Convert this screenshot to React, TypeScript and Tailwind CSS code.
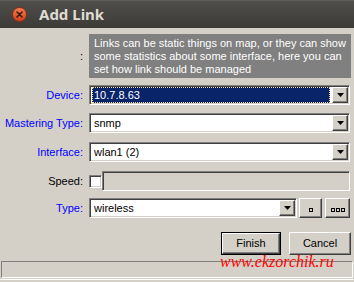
import React from 'react';

const sunken = 'border border-t-[#808080] border-l-[#808080] border-r-white border-b-white shadow-[inset_1px_1px_#404040,inset_-1px_-1px_#d4d0c8]';
const raised = 'border border-t-white border-l-white border-r-[#404040] border-b-[#404040] shadow-[inset_-1px_-1px_#808080]';

function Arrow() {
  return (
    <div className={`w-[16px] h-[16px] bg-[#d4d0c8] flex items-center justify-center ${raised}`}>
      <svg width="7" height="4" viewBox="0 0 7 4">
        <path d="M0 0h7L3.5 4z" fill="#000" />
      </svg>
    </div>
  );
}

function Label({ text, blue = true }: { text: string; blue?: boolean }) {
  return (
    <div className={`w-[84px] text-right pr-[1px] ${blue ? 'text-[#0000ff]' : 'text-black'}`}>{text}</div>
  );
}

function Combo({ value, selected = false, className = '' }: { value: string; selected?: boolean; className?: string }) {
  return (
    <div className={`h-[20px] bg-white flex items-center pl-[2px] pr-[1px] gap-[2px] ${sunken} ${className}`}>
      {selected ? (
        <div className="flex-1 h-[16px] bg-[#0a246a] text-white border border-dotted border-[#f5db95] flex items-center pl-[1px]">
          {value}
        </div>
      ) : (
        <div className="flex-1 h-[16px] flex items-center pl-[2px]">{value}</div>
      )}
      <Arrow />
    </div>
  );
}

export default function App() {
  return (
    <div className="w-[354px] h-[282px] bg-[#d4d0c8] flex flex-col overflow-hidden relative font-['Liberation_Sans',sans-serif] text-[11px] text-black">
      {/* Title bar */}
      <div className="h-[28px] shrink-0 bg-gradient-to-b from-[#4f4e4a] to-[#3c3b37] flex items-center border-t border-[#5f5e58]">
        <div className="ml-[12px] w-[15px] h-[15px] rounded-full bg-gradient-to-b from-[#f47a52] to-[#d2421a] border border-[#8a2e12] flex items-center justify-center">
          <svg width="7" height="7" viewBox="0 0 7 7">
            <path d="M1 1l5 5M6 1l-5 5" stroke="#3a1a0c" strokeWidth="1.6" strokeLinecap="round" />
          </svg>
        </div>
        <span className="ml-[12px] font-['Noto_Sans',sans-serif] font-bold text-[15px] text-[#dfdbd2] leading-none">Add Link</span>
      </div>

      {/* Body */}
      <div className="flex-1 flex flex-col pr-[3px]">
        <div className="flex items-center mt-[6px] gap-[5px]">
          <Label text=":" blue={false} />
          <div className="flex-1 h-[44px] bg-[#808080] text-white px-[5px] pt-[3px] leading-[13px]">
            Links can be static things on map, or they can show some statistics about some interface, here you can set how link should be managed
          </div>
        </div>

        <div className="flex items-center mt-[7px] gap-[5px]">
          <Label text="Device:" />
          <Combo value="10.7.8.63" selected className="flex-1 mr-[1px]" />
        </div>
        <div className="flex items-center mt-[8px] gap-[5px]">
          <Label text="Mastering Type:" />
          <Combo value="snmp" className="flex-1 mr-[1px]" />
        </div>
        <div className="flex items-center mt-[9px] gap-[5px]">
          <Label text="Interface:" />
          <Combo value="wlan1 (2)" className="flex-1 mr-[1px]" />
        </div>
        <div className="flex items-center mt-[9px] gap-[5px]">
          <Label text="Speed:" blue={false} />
          <div className="flex items-center flex-1 mr-[1px]">
            <div className={`w-[13px] h-[13px] bg-white ${sunken}`} />
            <div className={`flex-1 h-[20px] bg-[#d4d0c8] ${sunken}`} />
          </div>
        </div>
        <div className="flex items-center mt-[7px] gap-[5px]">
          <Label text="Type:" />
          <Combo value="wireless" className="w-[208px]" />
          <div className={`ml-[-3px] w-[23px] h-[20px] bg-[#d4d0c8] flex items-center justify-center ${raised}`}>
            <div className="w-[4px] h-[4px] border border-black mt-[4px]" />
          </div>
          <div className={`ml-[-2px] w-[25px] h-[20px] bg-[#d4d0c8] flex items-center justify-center gap-[1px] ${raised}`}>
            <div className="w-[4px] h-[4px] border border-black mt-[4px]" />
            <div className="w-[4px] h-[4px] border border-black mt-[4px]" />
            <div className="w-[4px] h-[4px] border border-black mt-[4px]" />
          </div>
        </div>

        <div className="flex justify-end gap-[8px] mt-[14px]">
          <div className="w-[60px] h-[23px] border border-black">
            <div className={`w-full h-full bg-[#d4d0c8] flex items-center justify-center ${raised}`}>Finish</div>
          </div>
          <div className={`w-[62px] h-[23px] bg-[#d4d0c8] flex items-center justify-center ${raised}`}>Cancel</div>
        </div>
      </div>

      {/* Status bar */}
      <div className="h-[17px] mx-[1px] mb-[1px] border border-t-[#808080] border-l-[#808080] border-r-white border-b-white shrink-0" />
      <div className="h-[3px] border-t border-white shrink-0" />

      {/* watermark */}
      <div className="absolute left-[220px] top-[254px] font-['Liberation_Serif',serif] italic text-[16px] text-[#ff0000] leading-none">
        www.ekzorchik.ru
      </div>
    </div>
  );
}
